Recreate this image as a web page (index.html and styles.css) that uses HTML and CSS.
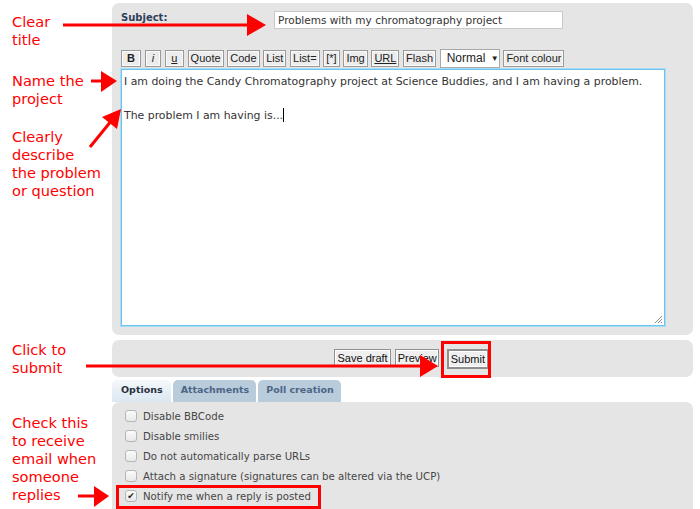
FILE: index.html
```html
<!DOCTYPE html>
<html>
<head>
<meta charset="utf-8">
<link rel="stylesheet" href="styles.css">
</head>
<body>
<div class="page">
  <div class="form">
    <div class="panel post">
      <div class="subject-row">
        <div class="subject-label">Subject:</div>
        <div class="input">Problems with my chromatography project</div>
      </div>
      <div class="toolbar">
        <span class="btn b-bold">B</span>
        <span class="btn b-ital">i</span>
        <span class="btn b-u">u</span>
        <span class="btn">Quote</span>
        <span class="btn">Code</span>
        <span class="btn">List</span>
        <span class="btn">List=</span>
        <span class="btn">[*]</span>
        <span class="btn">Img</span>
        <span class="btn b-url">URL</span>
        <span class="btn">Flash</span>
        <span class="select">Normal <span class="tri">▼</span></span>
        <span class="btn">Font colour</span>
      </div>
      <div class="textarea">
        <div class="line">I am doing the Candy Chromatography project at Science Buddies, and I am having a problem.</div>
        <div class="line">&nbsp;</div>
        <div class="line">The problem I am having is...<span class="caret"></span></div>
        <svg class="grip" width="9" height="9" viewBox="0 0 9 9"><path d="M8 1 L1 8 M8 4 L4 8 M8 7 L7 8" stroke="#888" stroke-width="1"/></svg>
      </div>
    </div>
    <div class="panel submit-bar">
      <span class="sbtn">Save draft</span>
      <span class="sbtn">Preview</span>
      <span class="sbtn default">Submit</span>
    </div>
    <div class="tabs">
      <span class="tab active">Options</span>
      <span class="tab">Attachments</span>
      <span class="tab">Poll creation</span>
    </div>
    <div class="panel options">
      <div class="opt"><span class="cb"></span>Disable BBCode</div>
      <div class="opt"><span class="cb"></span>Disable smilies</div>
      <div class="opt"><span class="cb"></span>Do not automatically parse URLs</div>
      <div class="opt"><span class="cb"></span>Attach a signature (signatures can be altered via the UCP)</div>
      <div class="opt"><span class="cb checked">✔</span>Notify me when a reply is posted</div>
    </div>
  </div>

  <div class="note n-title">Clear<br>title</div>
  <div class="note n-name">Name the<br>project</div>
  <div class="note n-desc">Clearly<br>describe<br>the problem<br>or question</div>
  <div class="note n-submit">Click to<br>submit</div>
  <div class="note n-check">Check this<br>to receive<br>email when<br>someone<br>replies</div>

  <div class="hl hl-submit"></div>
  <div class="hl hl-notify"></div>

  <svg class="arrows" width="700" height="509" viewBox="0 0 700 509">
    <g fill="#f00" stroke="#f00" stroke-width="3">
      <line x1="63" y1="25" x2="250" y2="25"/>
      <polygon stroke="none" points="247,14 266,25 247,36"/>
      <line x1="91" y1="81" x2="104" y2="81"/>
      <polygon stroke="none" points="101,71 117,81 101,92"/>
      <line x1="90" y1="147" x2="112" y2="120"/>
      <polygon stroke="none" points="121,109 117,129 102,117"/>
      <line x1="86" y1="366" x2="424" y2="366"/>
      <polygon stroke="none" points="420,355 438,366 420,377"/>
      <line x1="78" y1="496" x2="97" y2="496"/>
      <polygon stroke="none" points="94,486 109,496 94,507"/>
    </g>
  </svg>
</div>
</body>
</html>
```
FILE: styles.css
```css
html, body {
  margin: 0;
  padding: 0;
  background: #fff;
}
.page {
  position: relative;
  width: 700px;
  height: 509px;
  overflow: hidden;
  font-family: "DejaVu Sans", Verdana, sans-serif;
}
.form {
  margin-left: 112px;
  width: 581px;
  padding-top: 3px;
}
.panel {
  background: #e5e5e5;
  border-radius: 7px;
  box-sizing: border-box;
}
.post {
  height: 332px;
  padding: 8px 0 0 9px;
}
.subject-row {
  display: flex;
  align-items: flex-start;
  height: 21px;
}
.subject-label {
  width: 153px;
  font-weight: bold;
  font-size: 10px;
  color: #2f3f5a;
  line-height: 14px;
}
.input {
  width: 289px;
  height: 18px;
  box-sizing: border-box;
  background: #fff;
  border: 1px solid #c8c8c8;
  font-size: 10.5px;
  line-height: 16px;
  padding-left: 3px;
  color: #333;
  white-space: nowrap;
}
.toolbar {
  margin-top: 17px;
  display: flex;
  align-items: center;
  gap: 3.7px;
  height: 18px;
}
.btn {
  height: 17px;
  box-sizing: border-box;
  border: 1px solid #9a9a9a;
  box-shadow: inset 0 0 0 1px #fafafa;
  background: #ececec;
  font-family: "Liberation Sans", Arial, sans-serif;
  font-size: 11px;
  line-height: 15px;
  padding: 0 2px;
  color: #222;
  white-space: nowrap;
}
.b-bold { font-weight: bold; padding: 0 5px; }
.b-ital { font-style: italic; padding: 0 6px; }
.b-u { text-decoration: underline; padding: 0 5.5px; }
.b-url { text-decoration: underline; }
.select {
  height: 19px;
  width: 60px;
  box-sizing: border-box;
  border: 1px solid #a8a8a8;
  background: #fff;
  font-family: "Liberation Sans", Arial, sans-serif;
  font-size: 12px;
  line-height: 17px;
  padding-left: 6px;
  color: #222;
  white-space: nowrap;
}
.tri { font-size: 8px; vertical-align: 1px; margin-left: 2px; }
.textarea {
  position: relative;
  margin-top: 2px;
  width: 544px;
  height: 257px;
  box-sizing: border-box;
  background: #fff;
  border: 1px solid #6cc3ee;
  box-shadow: 0 0 0 1px #a9dcf5;
  padding: 3px 0 0 2px;
  font-size: 10.9px;
  line-height: 17px;
  color: #333;
}
.caret {
  display: inline-block;
  width: 1px;
  height: 14px;
  background: #000;
  vertical-align: -3px;
}
.grip {
  position: absolute;
  right: 1px;
  bottom: 1px;
}
.submit-bar {
  margin-top: 5px;
  height: 37px;
  display: flex;
  align-items: flex-start;
  gap: 4px;
  padding: 9px 0 0 222px;
}
.sbtn {
  height: 18px;
  box-sizing: border-box;
  border: 1px solid #8f8f8f;
  background: #efefef;
  box-shadow: inset 0 0 0 1px #fff;
  font-family: "Liberation Sans", Arial, sans-serif;
  font-size: 11px;
  line-height: 16px;
  padding: 0 1.5px;
  color: #111;
  white-space: nowrap;
}
.sbtn:first-child { padding: 0 2.5px; }
.sbtn.default {
  margin-left: 4px;
  height: 20px;
  line-height: 16px;
  border: 2px solid #8f8f8f;
  padding: 0 1.5px;
}
.tabs {
  margin-top: 3px;
  display: flex;
  gap: 2px;
  height: 22px;
}
.tab {
  box-sizing: border-box;
  height: 22px;
  border-radius: 5px 5px 0 0;
  background: #b9ccdc;
  font-size: 9.5px;
  font-weight: bold;
  color: #4d6685;
  line-height: 19px;
  padding: 0 7px 0 8px;
}
.tab.active {
  background: linear-gradient(#f4f8fb, #dce7f0);
  color: #28313f;
  padding: 0 8px 0 9px;
}
.options {
  height: 120px;
  padding-top: 4px;
  border-radius: 7px;
}
.opt {
  display: flex;
  align-items: center;
  height: 20px;
  font-size: 10.2px;
  color: #454545;
  padding-left: 13px;
  white-space: nowrap;
}
.cb {
  width: 12px;
  height: 12px;
  box-sizing: border-box;
  border: 1px solid #b5b5b5;
  border-radius: 3px;
  background: linear-gradient(#fbfbfb, #e8e8e8);
  margin-right: 6px;
  font-size: 9px;
  line-height: 10px;
  text-align: center;
  color: #222;
}
.note {
  position: absolute;
  left: 12px;
  color: #f00;
  font-size: 14.6px;
  line-height: 18px;
}
.n-title { top: 13px; }
.n-name { top: 72px; }
.n-desc { top: 128px; }
.n-submit { top: 341px; }
.n-check { top: 414px; }
.hl {
  position: absolute;
  border: 3px solid #f00;
  box-sizing: border-box;
}
.hl-submit { left: 441px; top: 341px; width: 50px; height: 37px; }
.hl-notify { left: 116px; top: 485px; width: 205px; height: 24px; }
.arrows {
  position: absolute;
  left: 0;
  top: 0;
  pointer-events: none;
}
```
